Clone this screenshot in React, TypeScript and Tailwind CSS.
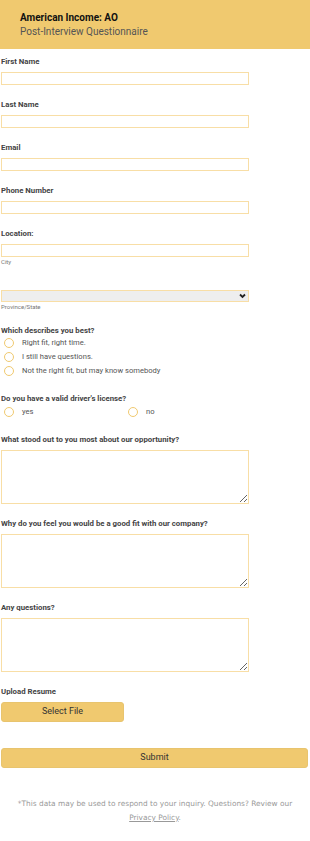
import { ReactNode } from 'react'

const inputCls = 'block w-[248px] h-[13px] border border-[#f8dea6] bg-white outline-none'
const areaCls = 'block w-[248px] h-[54px] border border-[#f8dea6] bg-white outline-none resize'
const labelCls = 'h-[10px] leading-[10px] text-[7.8px] font-bold text-[#444] whitespace-nowrap'
const btnCls = 'block h-[20px] rounded-[3px] bg-[#f0c96f] border border-[#e8c46e] text-[9px] text-[#333]'

function Label({ children }: { children: ReactNode }) {
  return <div className={`${labelCls} mb-[5px]`}>{children}</div>
}

function Radio({ label }: { label: string }) {
  return (
    <div className="flex items-center h-[14px]">
      <span className="ml-[3px] w-[10px] h-[10px] rounded-full border border-[#f0c96f] bg-white shrink-0" />
      <span className="ml-[8px] text-[7.6px] text-[#555] leading-[14px] whitespace-nowrap">{label}</span>
    </div>
  )
}

export default function App() {
  return (
    <div className="w-[310px] min-h-[841px] bg-white flex flex-col" style={{ fontFamily: 'Roboto, "Liberation Sans", sans-serif' }}>
      {/* Header */}
      <div className="h-[49px] bg-[#f0c96f] pl-[20px] pt-[11px] shrink-0">
        <div className="text-[10px] font-bold text-[#111] leading-[13px]">American Income: AO</div>
        <div className="text-[10px] text-[#555] leading-[13px] mt-[1px]">Post-Interview Questionnaire</div>
      </div>

      <div className="pl-[1px] pt-[8px] flex flex-col">
        {/* Text fields */}
        <div className="flex flex-col gap-[15px]">
          {['First Name', 'Last Name', 'Email', 'Phone Number'].map((f) => (
            <div key={f}>
              <Label>{f}</Label>
              <input className={inputCls} />
            </div>
          ))}
        </div>

        {/* Location */}
        <div className="mt-[15px]">
          <Label>Location:</Label>
          <input className={inputCls} />
          <div className="text-[6px] text-[#777] leading-[8px] mt-[1px]">City</div>
          <div className="relative mt-[24px] w-[248px] h-[12px]">
            <select className="appearance-none block w-[248px] h-[12px] border border-[#f8dea6] bg-[#eeeeee] text-[7px] outline-none">
              <option></option>
            </select>
            <svg className="absolute right-[3px] top-[3px] w-[7px] h-[6px]" viewBox="0 0 7 6">
              <path d="M1 1.5 L3.5 4 L6 1.5" fill="none" stroke="#222" strokeWidth="1.8" />
            </svg>
          </div>
          <div className="text-[6px] text-[#777] leading-[8px] mt-[1px]">Province/State</div>
        </div>

        {/* Which describes */}
        <div className="mt-[15px]">
          <div className={labelCls}>Which describes you best?</div>
          <Radio label="Right fit, right time." />
          <Radio label="I still have questions." />
          <Radio label="Not the right fit, but may know somebody" />
        </div>

        {/* License */}
        <div className="mt-[16px]">
          <div className={`${labelCls} mb-[1px]`}>Do you have a valid driver's license?</div>
          <div className="grid grid-cols-2 w-[248px]">
            <Radio label="yes" />
            <Radio label="no" />
          </div>
        </div>

        {/* Text areas */}
        <div className="mt-[16px] flex flex-col gap-[15px]">
          {[
            'What stood out to you most about our opportunity?',
            'Why do you feel you would be a good fit with our company?',
            'Any questions?',
          ].map((q) => (
            <div key={q}>
              <Label>{q}</Label>
              <textarea className={areaCls} />
            </div>
          ))}
        </div>

        {/* Upload */}
        <div className="mt-[15px]">
          <Label>Upload Resume</Label>
          <button className={`${btnCls} w-[123px]`}>Select File</button>
        </div>

        <button className={`${btnCls} mt-[26px] w-[307px]`}>Submit</button>
      </div>

      {/* Footer */}
      <div
        className="mt-[29px] text-center text-[7.4px] leading-[14px] text-[#999]"
        style={{ fontFamily: '"DejaVu Sans", Verdana, sans-serif' }}
      >
        *This data may be used to respond to your inquiry. Questions? Review our
        <br />
        <span className="underline">Privacy Policy</span>.
      </div>
    </div>
  )
}
